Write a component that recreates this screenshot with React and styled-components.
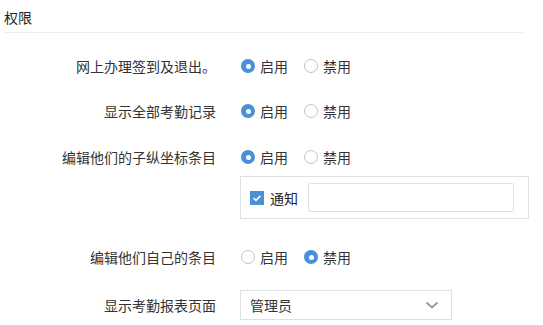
import React from 'react'
import styled, { createGlobalStyle } from 'styled-components'

const GlobalStyle = createGlobalStyle`
  body {
    margin: 0;
    background: #fff;
    font-family: "Noto Sans CJK SC", "Noto Sans", sans-serif;
    color: #333;
  }
`

const Page = styled.div`
  width: 543px;
  height: 325px;
  overflow: hidden;
`

const Header = styled.div`
  margin: 0 20px 0 4px;
  padding-top: 7px;
  height: 25px;
  border-bottom: 1px solid #eee;
  font-size: 14px;
  line-height: 20px;
  color: #222;
`

const Form = styled.div`
  display: flex;
  flex-direction: column;
`

const Field = styled.div`
  display: grid;
  grid-template-columns: 216px 1fr;
  column-gap: 24px;
  align-items: start;
  margin-top: ${(props) => props.$mt}px;
`

const Label = styled.div`
  text-align: right;
  font-size: 14px;
  line-height: 30px;
  height: 30px;
  color: #333;
  white-space: nowrap;
`

const Controls = styled.div`
  display: flex;
  flex-direction: column;
`

const RadioGroup = styled.div`
  display: flex;
  align-items: center;
  height: 30px;
  gap: 15px;
`

const RadioItem = styled.label`
  display: flex;
  align-items: center;
  gap: 5px;
  font-size: 14px;
  color: #333;
`

const RadioDot = styled.span`
  box-sizing: border-box;
  width: 14px;
  height: 14px;
  border-radius: 50%;
  margin-left: 1px;
  display: flex;
  align-items: center;
  justify-content: center;
  background: ${(props) => (props.$on ? '#4a90d9' : '#fff')};
  border: ${(props) => (props.$on ? 'none' : '1.5px solid #c4c4c4')};

  &::after {
    content: '';
    width: 5px;
    height: 5px;
    border-radius: 50%;
    background: #fff;
    display: ${(props) => (props.$on ? 'block' : 'none')};
  }
`

const NoticeBox = styled.div`
  box-sizing: border-box;
  margin-top: 4px;
  width: 289px;
  height: 43px;
  border: 1px solid #e0e0e0;
  display: flex;
  align-items: center;
  padding-left: 9px;
`

const CheckBox = styled.span`
  width: 14px;
  height: 14px;
  background: #4a90d9;
  display: flex;
  align-items: center;
  justify-content: center;
`

const CheckText = styled.span`
  font-size: 14px;
  margin-left: 6px;
  color: #222;
`

const TextInput = styled.div`
  box-sizing: border-box;
  margin-left: 10px;
  width: 206px;
  height: 29px;
  border: 1px solid #e0e0e0;
  border-radius: 2px;
`

const Select = styled.div`
  box-sizing: border-box;
  width: 212px;
  height: 30px;
  border: 1px solid #e0e0e0;
  display: flex;
  align-items: center;
  justify-content: space-between;
  padding: 0 12px 0 9px;
  font-size: 14px;
  color: #333;
`

const Radio = ({ on, children }) => (
  <RadioItem>
    <RadioDot $on={on} />
    {children}
  </RadioItem>
)

const Toggle = ({ enabled }) => (
  <RadioGroup>
    <Radio on={enabled}>启用</Radio>
    <Radio on={!enabled}>禁用</Radio>
  </RadioGroup>
)

const App = () => {
  return (
    <Page>
      <GlobalStyle />
      <Header>权限</Header>
      <Form>
        <Field $mt={18}>
          <Label>网上办理签到及退出。</Label>
          <Toggle enabled />
        </Field>
        <Field $mt={15}>
          <Label>显示全部考勤记录</Label>
          <Toggle enabled />
        </Field>
        <Field $mt={16}>
          <Label>编辑他们的子纵坐标条目</Label>
          <Controls>
            <Toggle enabled />
            <NoticeBox>
              <CheckBox>
                <svg width='10' height='8' viewBox='0 0 10 8'>
                  <polyline points='1.5,4 4,6.3 8.5,1.7' fill='none' stroke='#fff' strokeWidth='1.6' />
                </svg>
              </CheckBox>
              <CheckText>通知</CheckText>
              <TextInput />
            </NoticeBox>
          </Controls>
        </Field>
        <Field $mt={23}>
          <Label>编辑他们自己的条目</Label>
          <Toggle enabled={false} />
        </Field>
        <Field $mt={18}>
          <Label>显示考勤报表页面</Label>
          <Select>
            管理员
            <svg width='14' height='8' viewBox='0 0 14 8'>
              <polyline points='1.5,1.5 7,6.5 12.5,1.5' fill='none' stroke='#999' strokeWidth='1.8' />
            </svg>
          </Select>
        </Field>
      </Form>
    </Page>
  )
}

export default App
